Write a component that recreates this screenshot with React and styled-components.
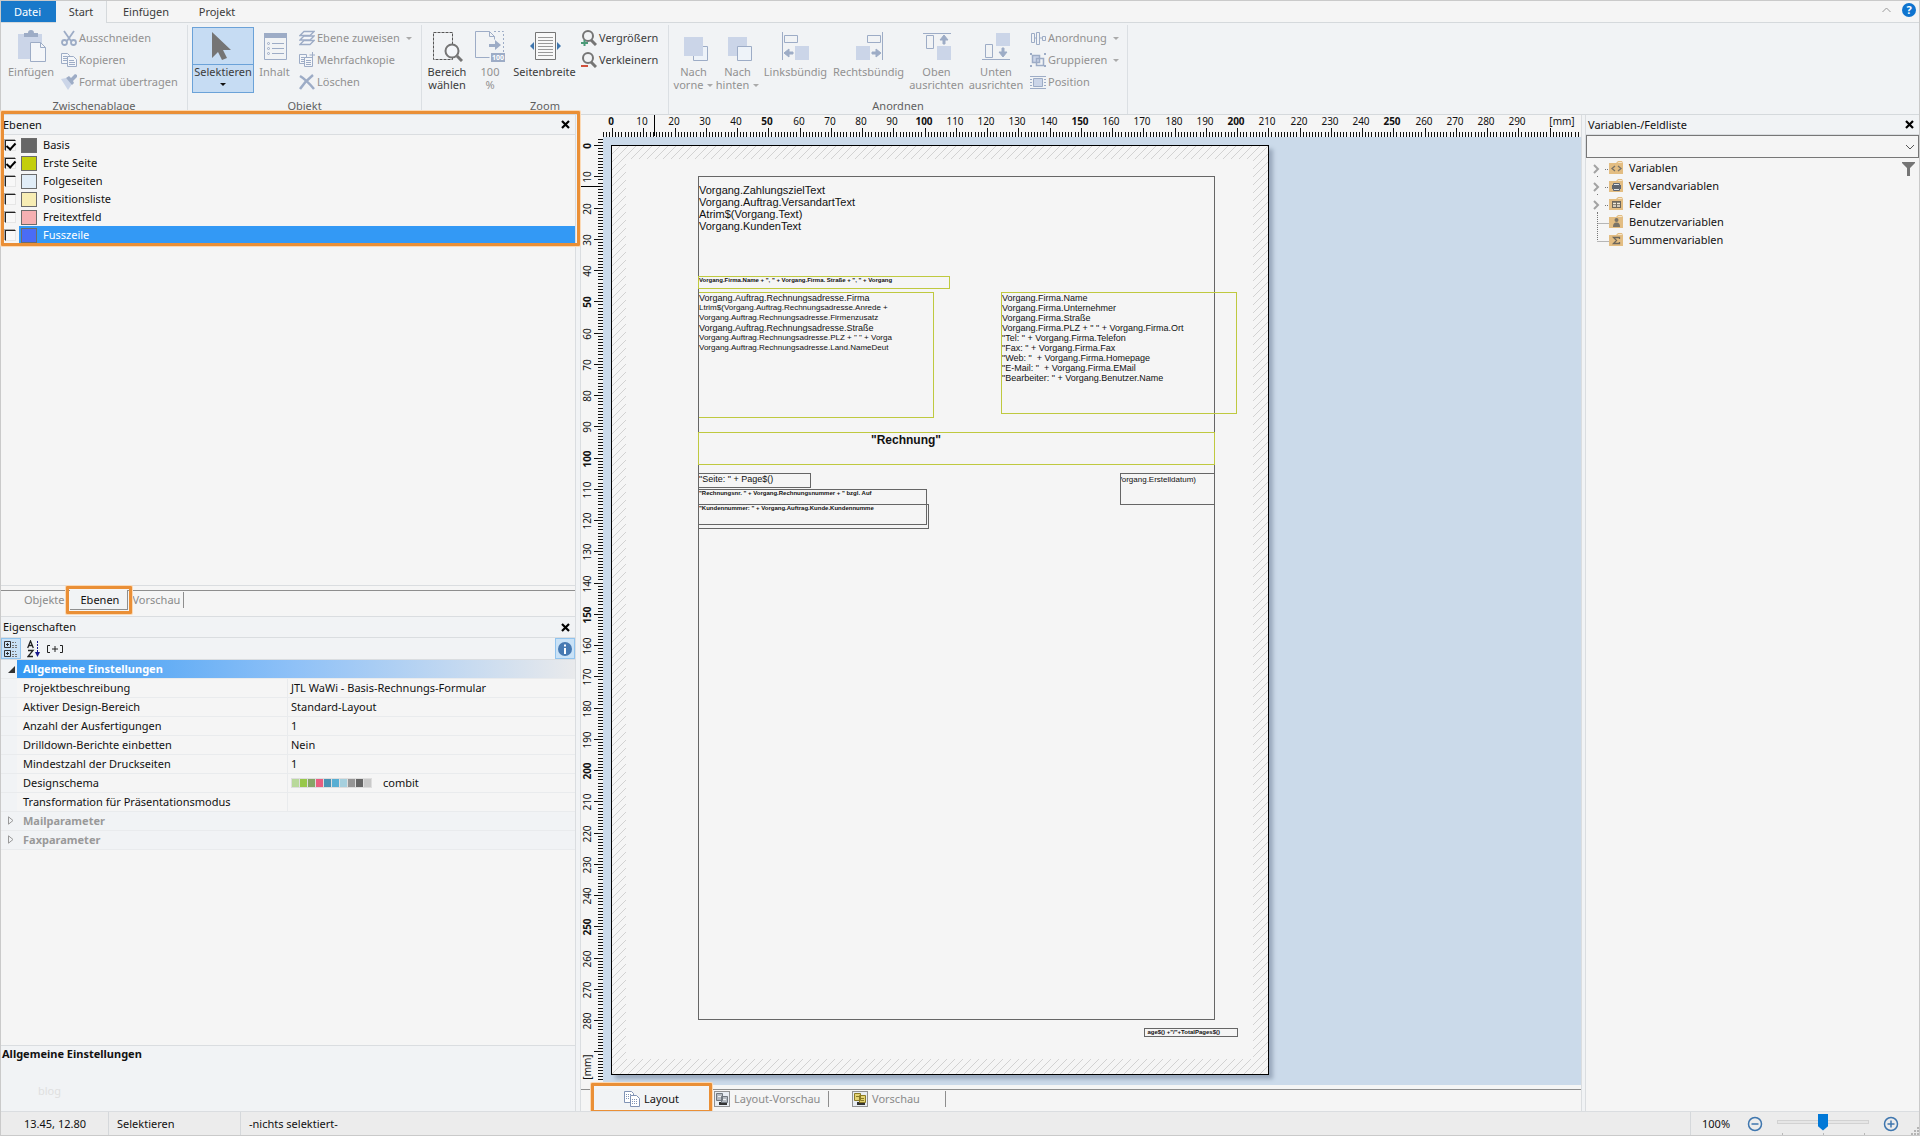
import React, { useState } from "react";
import styled, { createGlobalStyle, css } from "styled-components";

const PX_PER_MM = 3.125;

const layerData = [
	{ name: "Basis", color: "#666666", checked: true },
	{ name: "Erste Seite", color: "#c3ce0c", checked: true },
	{ name: "Folgeseiten", color: "#e1edf7", checked: false },
	{ name: "Positionsliste", color: "#f7edb4", checked: false },
	{ name: "Freitextfeld", color: "#f5b0b2", checked: false },
	{ name: "Fusszeile", color: "#4a6cf5", checked: false },
];

const schemeColors = [
	"#b9d99b",
	"#98c84a",
	"#86a567",
	"#e85e80",
	"#4a93b4",
	"#58aed3",
	"#a6d0de",
	"#969696",
	"#666666",
	"#c9c9c9",
];

const properties = [
	["Projektbeschreibung", "JTL WaWi - Basis-Rechnungs-Formular"],
	["Aktiver Design-Bereich", "Standard-Layout"],
	["Anzahl der Ausfertigungen", "1"],
	["Drilldown-Berichte einbetten", "Nein"],
	["Mindestzahl der Druckseiten", "1"],
	["Designschema", "combit"],
	["Transformation für Präsentationsmodus", ""],
];

const GREY = "#666666";
const LIME = "#bfc93f";

// positions are relative to the sheet
const objects = [
	{
		x: 86, y: 146, w: 236, h: 126, color: LIME, size: 9, line: 10, longSize: 8,
		lines: [
			"Vorgang.Auftrag.Rechnungsadresse.Firma",
			"Ltrim$(Vorgang.Auftrag.Rechnungsadresse.Anrede +",
			"Vorgang.Auftrag.Rechnungsadresse.Firmenzusatz",
			"Vorgang.Auftrag.Rechnungsadresse.Straße",
			'Vorgang.Auftrag.Rechnungsadresse.PLZ + " " + Vorga',
			"Vorgang.Auftrag.Rechnungsadresse.Land.NameDeut",
		],
	},
	{
		x: 86, y: 30, w: 517, h: 844, color: GREY, size: 11, line: 12, top: 7,
		lines: [
			"Vorgang.ZahlungszielText",
			"Vorgang.Auftrag.VersandartText",
			"Atrim$(Vorgang.Text)",
			"Vorgang.KundenText",
		],
	},
	{
		x: 86, y: 130, w: 252, h: 13, color: LIME, size: 6, line: 6, bold: true,
		lines: ['Vorgang.Firma.Name + ", " + Vorgang.Firma. Straße + ", " + Vorgang'],
	},
	{
		x: 389, y: 146, w: 236, h: 122, color: LIME, size: 9, line: 10,
		lines: [
			"Vorgang.Firma.Name",
			"Vorgang.Firma.Unternehmer",
			"Vorgang.Firma.Straße",
			'Vorgang.Firma.PLZ + " " + Vorgang.Firma.Ort',
			'"Tel: " + Vorgang.Firma.Telefon',
			'"Fax: " + Vorgang.Firma.Fax',
			'"Web: "  + Vorgang.Firma.Homepage',
			'"E-Mail: "  + Vorgang.Firma.EMail',
			'"Bearbeiter: " + Vorgang.Benutzer.Name',
		],
	},
	{
		x: 86, y: 286, w: 517, h: 33, color: LIME, size: 12, line: 14, width: 414, bold: true, align: "center",
		lines: ['"Rechnung"'],
	},
	{ x: 86, y: 327, w: 113, h: 15, color: GREY, size: 9, line: 11, lines: ['"Seite: " + Page$()'] },
	{
		x: 86, y: 343, w: 229, h: 36, color: GREY, size: 6, line: 6, bold: true,
		lines: ['"Rechnungsnr. " + Vorgang.Rechnungsnummer + " bzgl. Auf'],
	},
	{
		x: 86, y: 358, w: 231, h: 25, color: GREY, size: 6, line: 6, bold: true,
		lines: ['"Kundennummer: " + Vorgang.Auftrag.Kunde.Kundennumme'],
	},
	{
		x: 508, y: 327, w: 95, h: 32, color: GREY, size: 8, line: 11, width: 75, align: "flex-end",
		lines: ["Vorgang.Erstelldatum)"],
	},
	{
		x: 532, y: 882, w: 94, h: 9, color: GREY, size: 6, line: 6, width: 75, align: "flex-end", bold: true,
		lines: ['age$() +"/"+TotalPages$()'],
	},
];

/* ---------- icons ---------- */

const C = { line: "#9dacc6", fill: "#cbd5e8", dark: "#757575", blue: "#3f76ae" };

const bigIcons = {
	paste: (
		<>
			<path d="M3 4h24v25H3z" fill={C.fill} />
			<path d="M9 7V3h4a3 3 0 0 1 6 0h4v4z" fill={C.line} />
			<path d="M15.500 12.500h10l5 5v14h-15z" fill="#f4f6f9" stroke={C.line} />
			<path d="M25.500 12.500v5h5" fill="none" stroke={C.line} />
		</>
	),
	cursor: <path d="M5 2v26l6-6 4 8 5-2-4-8h8z" fill={C.dark} />,
	content: (
		<>
			<path d="M5 3h23v5H5z" fill={C.line} />
			<path d="M5.500 3.500h22v26h-22z" fill="none" stroke={C.line} />
			<path d="M13 13.500h12M13 18.500h12M13 23.500h12" stroke={C.line} />
			<g fill="none" stroke={C.line}>
				<circle cx="9.500" cy="13.500" r="1" />
				<circle cx="9.500" cy="18.500" r="1" />
				<circle cx="9.500" cy="23.500" r="1" />
			</g>
		</>
	),
	area: (
		<>
			<path d="M2.500 2.500h19v27h-19z" fill="none" stroke="#555" strokeDasharray="3 1" />
			<circle cx="21" cy="21" r="6.500" fill="#f4f6f9" stroke={C.dark} strokeWidth="2" />
			<path d="M26 26l5 5" stroke={C.dark} strokeWidth="3" />
		</>
	),
	hundred: (
		<>
			<path d="M1.500 1.500h14l5 5v3M1.500 1.500v26h14M15.500 1.500v5h5" fill="none" stroke={C.line} />
			<path d="M20 1.500h9.500V22" fill="none" stroke={C.line} strokeDasharray="2 2" />
			<path d="M15 14h6v-4l6 5-6 5v-3h-6z" fill={C.line} />
			<path d="M17 23h14v9H17z" fill={C.line} />
			<text x="24" y="30" fontSize="7" fontWeight="700" textAnchor="middle" fill="#fff" fontFamily="Noto Sans, sans-serif">
				100
			</text>
		</>
	),
	width: (
		<>
			<path d="M6.500 2.500h20v27h-20z" fill="#f8f8f8" stroke={C.dark} />
			<path d="M9 7.500h15M9 10.500h15M9 13.500h15M9 16.500h15M9 19.500h15M9 22.500h15M9 25.500h15" stroke="#999" />
			<path d="M5 12v8l-4-4zM28 12v8l4-4z" fill={C.blue} />
		</>
	),
	front: (
		<>
			<path d="M15.500 30.500h14v-14h-14z" fill="#eef3f9" stroke={C.line} />
			<path d="M6 7h19v19H6z" fill={C.fill} />
		</>
	),
	back: (
		<>
			<path d="M6 7h19v19H6z" fill={C.fill} />
			<path d="M15.500 16.500h14v14h-14z" fill="#eef3f9" stroke={C.line} />
		</>
	),
	left: (
		<>
			<path d="M2.500 2v28M4.500 5.500h13v7h-13z" fill="none" stroke={C.line} />
			<path d="M15 16h14v14H15z" fill={C.fill} />
			<path d="M4 23l5-4v3h4v2H9v3z" fill={C.line} stroke={C.line} />
		</>
	),
	right: (
		<>
			<path d="M29.500 2v28M14.500 5.500h13v7h-13z" fill="none" stroke={C.line} />
			<path d="M3 16h14v14H3z" fill={C.fill} />
			<path d="M28 23l-5-4v3h-4v2h4v3z" fill={C.line} stroke={C.line} />
		</>
	),
	top: (
		<>
			<path d="M2 3.500h28M5.500 5.500h7v13h-7z" fill="none" stroke={C.line} />
			<path d="M16 16h14v14H16z" fill={C.fill} />
			<path d="M23 5l-4 5h3v4h2v-4h3z" fill={C.line} stroke={C.line} />
		</>
	),
	bottom: (
		<>
			<path d="M2 29.500h28M5.500 14.500h7v13h-7z" fill="none" stroke={C.line} />
			<path d="M16 3h14v13H16z" fill={C.fill} />
			<path d="M23 27l-4-5h3v-4h2v4h3z" fill={C.line} stroke={C.line} />
		</>
	),
};

const smallIcons = {
	cut: (
		<g fill="none" stroke={C.line} strokeWidth="1.800">
			<path d="M3 1l7 10M13 1L6 11" />
			<circle cx="3.500" cy="12.500" r="2.500" />
			<circle cx="12.500" cy="12.500" r="2.500" />
		</g>
	),
	copy: (
		<g fill="#f4f6f9" stroke={C.line}>
			<path d="M.5 1.500h6l2 2v8h-8z" />
			<path d="M2 4.500h4M2 6.500h4M2 8.500h4" />
			<path d="M6.500 4.500h6l3 3v7h-9z" />
			<path d="M8 8.500h5M8 10.500h6M8 12.500h6" />
		</g>
	),
	brush: (
		<>
			<path d="M0 5l5-1 6 6-4 6z" fill={C.fill} />
			<path d="M5 4l3-2 2 2 4-4 2 1v2l-4 4 1 2-2 2z" fill={C.line} />
		</>
	),
	layers: (
		<g fill="#f4f6f9" stroke={C.line} strokeWidth="1.300">
			<path d="M5 10.500h10l-4 4H1z" />
			<path d="M5 6h10l-4 4H1z" />
			<path d="M5 1.500h10l-4 4H1z" />
		</g>
	),
	multi: (
		<g fill="#f4f6f9" stroke={C.line}>
			<path d="M.5 2.500h7v9h-7z" />
			<path d="M2 5.500h4M2 7.500h4M2 9.500h4" />
			<path d="M5.500 5.500h8v9h-8z" />
			<path d="M7 8.500h5M7 10.500h5M7 12.500h5M13.500 0v6M10.500 3h6" />
		</g>
	),
	remove: <path d="M1 2c5 3 9 7 14 13M14 1C9 5 5 9 1 15" fill="none" stroke={C.line} strokeWidth="2.500" />,
	zoomIn: (
		<>
			<circle cx="7" cy="6" r="5" fill="none" stroke={C.dark} strokeWidth="2" />
			<path d="M10 10l5 5" stroke={C.dark} strokeWidth="3" />
			<path d="M0 13h7M3.500 10v6" stroke="#4a9a78" strokeWidth="2" />
		</>
	),
	zoomOut: (
		<>
			<circle cx="7" cy="6" r="5" fill="none" stroke={C.dark} strokeWidth="2" />
			<path d="M10 10l5 5" stroke={C.dark} strokeWidth="3" />
			<path d="M0 14h7" stroke="#d0503c" strokeWidth="2" />
		</>
	),
	arrange: (
		<path d="M1.500 3.500h3v9h-3zM6.500 2.500h3v12h-3zM12.500 6.500h3v4h-3zM4.500 8h2M9.500 8h3" fill="none" stroke={C.line} />
	),
	group: (
		<>
			<path d="M2 3h8v8H2z" fill={C.fill} />
			<path d="M2.500 3.500h7v7h-7zM6.500 6.500h7v7h-7z" fill="none" stroke={C.line} strokeWidth="1.500" />
			<path d="M0 1h2v2H0zM14 1h2v2h-2zM0 13h2v2H0zM14 13h2v2h-2z" fill={C.line} />
		</>
	),
	position: (
		<>
			<path d="M0 2.500h16M0 14.500h16M0 5.500h2M0 8.500h2M0 11.500h2M14 5.500h2M14 8.500h2M14 11.500h2" stroke={C.line} />
			<path d="M3.500 4.500h9v8h-9z" fill={C.fill} stroke={C.line} />
		</>
	),
	layout: (
		<g fill="#fff" stroke="#8093b5">
			<path d="M.5.500h7l2 2v9h-9z" />
			<path d="M2 3.500h6M2 5.500h6M2 7.500h6" strokeDasharray="1 1" />
			<path d="M6.500 4.500h6l3 3v8h-9z" />
			<path d="M8 8.500h6M8 10.500h6M8 12.500h6" strokeDasharray="1 1" />
		</g>
	),
	preview: (
		<>
			<path d="M.5.500h15v15H.5z" fill="#e8edf3" stroke="#333" strokeDasharray="1 1" />
			<path d="M5 11h8v3H5z" fill="#333" />
			<path d="M2.500 2.500h6v7h-6zM7.500 5.500h6v6h-6z" fill="#b4bac1" stroke="#70777f" />
			<path d="M4 5.500h3M9 8.500h3" stroke="#eef1f4" />
		</>
	),
	previewColor: (
		<>
			<path d="M.5.500h15v15H.5z" fill="#e8edf3" stroke="#333" strokeDasharray="1 1" />
			<path d="M5 11h8v3H5z" fill="#333" />
			<path d="M2.500 2.500h6v7h-6zM7.500 4.500h6v7h-6z" fill="#e3d373" stroke="#8a7a26" />
			<path d="M9 7.500h3M9 9.500h3M4 5.500h3" stroke="#8a7a26" />
		</>
	),
};

const folderGlyphs = {
	code: <path d="M6 5L3 7.500 6 10M9 5l3 2.500L9 10" fill="none" stroke="#7a7468" strokeWidth="1.300" />,
	printer: (
		<>
			<path d="M3 6h9v4H3z" fill="#5f656f" />
			<path d="M4.500 4.500h6v2h-6zM4.500 9.500h6v2h-6z" fill="#dfe3e8" stroke="#5f656f" />
		</>
	),
	table: (
		<>
			<path d="M3 4h9v7H3z" fill="#6d675c" />
			<path d="M4 6.500h3M8 6.500h3M4 9h3M8 9h3" stroke="#f3ead8" strokeWidth="1.500" />
		</>
	),
	user: (
		<>
			<circle cx="7.500" cy="5" r="2" fill="#7a7468" />
			<path d="M4 12c0-3 .8-4.500 3.500-4.500S11 9 11 12z" fill="#7a7468" />
		</>
	),
	sum: <path d="M10.500 6V4.500h-6l3 3-3 3h6V9" fill="none" stroke="#6d675c" strokeWidth="1.300" />,
};

const Icon = ({ name }) => (
	<svg width="16" height="16" viewBox="0 0 16 16" aria-hidden="true">
		{smallIcons[name]}
	</svg>
);

const Folder = ({ glyph }) => (
	<svg width="15" height="14" viewBox="0 0 15 14" aria-hidden="true">
		<path d="M0 2h7l2-2h4l1 2v11H0z" fill="#e3bd82" />
		<path d="M8.500 2l1-1h3l1 1z" fill="#f5e6cd" />
		{folderGlyphs[glyph]}
	</svg>
);

const Branch = ({ kind }) => (
	<svg width="19" height="18" viewBox="0 0 19 18" aria-hidden="true">
		{kind === "closed" ? (
			<>
				<path d="M4 6l4 4-4 4" fill="none" stroke="#a2a2a2" strokeWidth="2" />
				<path d="M15 10.500h4M7.500 17v1" stroke="#777" strokeDasharray="1 1" />
			</>
		) : (
			<path d={kind === "last" ? "M7.500 0v10M7.500 10.500h12" : "M7.500 0v18M7.500 10.500h12"} fill="none" stroke="#777" strokeDasharray="1 1" />
		)}
	</svg>
);

const CloseIcon = () => (
	<svg width="9" height="9" viewBox="0 0 9 9" aria-hidden="true">
		<path d="M1 1l7 7M8 1L1 8" stroke="#000" strokeWidth="2.200" />
	</svg>
);

/* ---------- rulers ---------- */

function HorizontalRuler() {
	const origin = 31;
	const ticks = [];
	for (let mm = -3; mm <= 310; mm++) {
		const x = origin + Math.round(mm * PX_PER_MM);
		ticks.push(`M${x} ${mm % 10 === 0 ? 13 : 17}v${mm % 10 === 0 ? 9 : 5}`);
	}
	return (
		<RulerTop>
			<path d={ticks.join("")} stroke="#111" transform="translate(.5 0)" />
			<path d="M73.500 0v21" stroke="#000" />
			{Array.from({ length: 30 }, (_, i) => (
				<RulerText key={i} x={origin + Math.round(i * 10 * PX_PER_MM) - 1} y="10" $bold={i % 5 === 0}>
					{i * 10}
				</RulerText>
			))}
			<RulerText x={origin + 950} y="10">[mm]</RulerText>
		</RulerTop>
	);
}

function VerticalRuler() {
	const origin = 8;
	const ticks = [];
	for (let mm = -2; mm <= 300; mm++) {
		const y = origin + Math.round(mm * PX_PER_MM);
		ticks.push(`M${mm % 10 === 0 ? 13 : 17} ${y}h${mm % 10 === 0 ? 9 : 5}`);
	}
	const rotated = (y) => `translate(10 ${y}) rotate(-90)`;
	return (
		<RulerLeft>
			<path d={ticks.join("")} stroke="#111" transform="translate(0 .5)" />
			<path d="M0 49.500h19" stroke="#000" />
			{Array.from({ length: 29 }, (_, i) => (
				<RulerText key={i} transform={rotated(origin + 1 + Math.round(i * 10 * PX_PER_MM))} $bold={i % 5 === 0}>
					{i * 10}
				</RulerText>
			))}
			<RulerText transform={rotated(930)}>[mm]</RulerText>
		</RulerLeft>
	);
}

/* ---------- ribbon parts ---------- */

function RibbonButton({ icon, label, width, active, enabled, arrow }) {
	return (
		<BigButton type="button" $width={width} $active={active} $enabled={enabled || active}>
			<svg width="32" height="32" viewBox="0 0 32 32" aria-hidden="true">
				{bigIcons[icon]}
			</svg>
			{label.map((part, i) => (
				<span key={part}>
					{part}
					{arrow && i === label.length - 1 && <Caret />}
				</span>
			))}
			{active && <ActiveCaret />}
		</BigButton>
	);
}

function RibbonItem({ icon, label, enabled, arrow }) {
	return (
		<SmallButton type="button" $enabled={enabled}>
			<Icon name={icon} />
			{label}
			{arrow && <Caret />}
		</SmallButton>
	);
}

function Ribbon() {
	return (
		<RibbonBar>
			<Group>
				<GroupBody>
					<RibbonButton icon="paste" label={["Einfügen"]} width={52} />
					<SmallColumn $width={130}>
						<RibbonItem icon="cut" label="Ausschneiden" />
						<RibbonItem icon="copy" label="Kopieren" />
						<RibbonItem icon="brush" label="Format übertragen" />
					</SmallColumn>
				</GroupBody>
				<GroupLabel>Zwischenablage</GroupLabel>
			</Group>
			<Group>
				<GroupBody>
					<RibbonButton icon="cursor" label={["Selektieren"]} width={62} active />
					<RibbonButton icon="content" label={["Inhalt"]} width={41} />
					<SmallColumn $width={126}>
						<RibbonItem icon="layers" label="Ebene zuweisen" arrow />
						<RibbonItem icon="multi" label="Mehrfachkopie" />
						<RibbonItem icon="remove" label="Löschen" />
					</SmallColumn>
				</GroupBody>
				<GroupLabel>Objekt</GroupLabel>
			</Group>
			<Group>
				<GroupBody>
					<RibbonButton icon="area" label={["Bereich", "wählen"]} width={42} enabled />
					<RibbonButton icon="hundred" label={["100", "%"]} width={44} />
					<RibbonButton icon="width" label={["Seitenbreite"]} width={65} enabled />
					<SmallColumn $width={91}>
						<RibbonItem icon="zoomIn" label="Vergrößern" enabled />
						<RibbonItem icon="zoomOut" label="Verkleinern" enabled />
					</SmallColumn>
				</GroupBody>
				<GroupLabel>Zoom</GroupLabel>
			</Group>
			<Group>
				<GroupBody>
					<RibbonButton icon="front" label={["Nach", "vorne"]} width={41} arrow />
					<RibbonButton icon="back" label={["Nach", "hinten"]} width={47} arrow />
					<RibbonButton icon="left" label={["Linksbündig"]} width={69} />
					<RibbonButton icon="right" label={["Rechtsbündig"]} width={77} />
					<RibbonButton icon="top" label={["Oben", "ausrichten"]} width={59} />
					<RibbonButton icon="bottom" label={["Unten", "ausrichten"]} width={60} />
					<SmallColumn $width={101}>
						<RibbonItem icon="arrange" label="Anordnung" arrow />
						<RibbonItem icon="group" label="Gruppieren" arrow />
						<RibbonItem icon="position" label="Position" />
					</SmallColumn>
				</GroupBody>
				<GroupLabel>Anordnen</GroupLabel>
			</Group>
		</RibbonBar>
	);
}

/* ---------- panels ---------- */

function LayersPanel() {
	const [layers, setLayers] = useState(layerData);
	const [selected, setSelected] = useState("Fusszeile");

	const toggle = (name) => {
		setLayers(layers.map((l) => (l.name === name ? { ...l, checked: !l.checked } : l)));
	};

	return (
		<Layers>
			<Highlighted>
				<PanelHeader>
					Ebenen
					<CloseButton type="button" aria-label="Ebenen schließen">
						<CloseIcon />
					</CloseButton>
				</PanelHeader>
				<LayerList>
					{layers.map((layer) => (
						<LayerRow key={layer.name} $selected={layer.name === selected} onClick={() => setSelected(layer.name)}>
							<LayerCheck>
								<CheckBox
									type="checkbox"
									id={`layer-${layer.name}`}
									checked={layer.checked}
									onChange={() => toggle(layer.name)}
								/>
							</LayerCheck>
							<Swatch $color={layer.color} />
							<label htmlFor={`layer-${layer.name}`}>{layer.name}</label>
						</LayerRow>
					))}
				</LayerList>
			</Highlighted>
			<LayersTabs>
				<PanelTab type="button">Objekte</PanelTab>
				<PanelTabMarked>
					<PanelTab type="button" $active>Ebenen</PanelTab>
				</PanelTabMarked>
				<PanelTab type="button" $last>Vorschau</PanelTab>
			</LayersTabs>
		</Layers>
	);
}

function PropertiesPanel() {
	return (
		<Properties>
			<PanelHeader $divided>
				Eigenschaften
				<CloseButton type="button" aria-label="Eigenschaften schließen">
					<CloseIcon />
				</CloseButton>
			</PanelHeader>
			<PropertyTools>
				<ToolButton type="button" aria-label="Nach Kategorien" $active>
					<svg width="16" height="18" viewBox="0 0 16 18">
						<path d="M1.500 1.500h6v6h-6zM1.500 10.500h6v6h-6zM3 4.500h3M4.500 3v3M3 13.500h3M4.500 12v3" fill="none" stroke="#333" />
						<path d="M9 2.500h4M9 5.500h6M9 7.500h6M9 11.500h4M9 14.500h6M9 16.500h6" stroke="#777" strokeDasharray="2 1" />
					</svg>
				</ToolButton>
				<ToolButton type="button" aria-label="Alphabetisch">
					<svg width="14" height="18" viewBox="0 0 14 18">
						<path d="M.7 8L3.500 1l2.800 7M1.700 5.500h3.600M1 10.500h5L1 16.500h5" fill="none" stroke="#222" strokeWidth="1.300" />
						<path d="M10.500 1v12" stroke="#16168c" strokeDasharray="2 1" />
						<path d="M8 12h5l-2.500 5z" fill="#16168c" />
					</svg>
				</ToolButton>
				<ToolButton type="button" aria-label="Alle aufklappen">
					<svg width="16" height="10" viewBox="0 0 16 10">
						<path d="M3 1.500H.5v7H3M13 1.500h2.500v7H13M5 5h6M8 2v6" fill="none" stroke="#222" />
					</svg>
				</ToolButton>
				<InfoButton type="button" aria-label="Beschreibung" $active>
					<svg width="14" height="14" viewBox="0 0 14 14">
						<circle cx="7" cy="7" r="7" fill="#4679b2" />
						<path d="M7 2.500v2M7 6v6" stroke="#fff" strokeWidth="2" />
					</svg>
				</InfoButton>
			</PropertyTools>
			<PropertyTable>
				<colgroup>
					<NarrowCol />
					<NameCol />
					<col />
				</colgroup>
				<tbody>
					<tr>
						<Gutter>
							<svg width="7" height="7" viewBox="0 0 7 7"><path d="M7 0v7H0z" fill="#333" /></svg>
						</Gutter>
						<CategoryOpen colSpan="2">Allgemeine Einstellungen</CategoryOpen>
					</tr>
					{properties.map(([name, value]) => (
						<tr key={name}>
							<Gutter />
							<PropName>{name}</PropName>
							<PropValue>
								{name === "Designschema" ? (
									<Scheme>
										<SchemeStrip>
											{schemeColors.map((c) => (
												<SchemeCell key={c} $color={c} />
											))}
										</SchemeStrip>
										{value}
									</Scheme>
								) : (
									value
								)}
							</PropValue>
						</tr>
					))}
					{["Mailparameter", "Faxparameter"].map((name) => (
						<tr key={name}>
							<Gutter>
								<svg width="6" height="9" viewBox="0 0 6 9"><path d="M.5.800v7.400l4.500-3.700z" fill="none" stroke="#999" /></svg>
							</Gutter>
							<CategoryClosed colSpan="2">{name}</CategoryClosed>
						</tr>
					))}
				</tbody>
			</PropertyTable>
			<Description>
				<strong>Allgemeine Einstellungen</strong>
				<Faint>blog</Faint>
			</Description>
		</Properties>
	);
}

function Designer() {
	return (
		<Center>
			<HorizontalRuler />
			<WorkRow>
				<VerticalRuler />
				<Canvas>
					<Sheet>
						<Hatch />
						{objects.map((o) => (
							<DesignObject key={o.lines[0]} $o={o}>
								<ObjectText $o={o}>
									{o.lines.map((line) => (
										<ObjectLine key={line} $align={o.align} $size={o.longSize && line.length > 40 ? o.longSize : o.size}>
											{line}
										</ObjectLine>
									))}
								</ObjectText>
							</DesignObject>
						))}
					</Sheet>
				</Canvas>
			</WorkRow>
			<ViewTabs>
				<ViewTabMarked>
					<ViewTab type="button" $active>
						<Icon name="layout" />
						Layout
					</ViewTab>
				</ViewTabMarked>
				<ViewTab type="button" $width={117}>
					<Icon name="preview" />
					Layout-Vorschau
				</ViewTab>
				<ViewTab type="button" $width={117} $centered>
					<Icon name="previewColor" />
					Vorschau
				</ViewTab>
			</ViewTabs>
		</Center>
	);
}

function Hatch() {
	return (
		<HatchSvg aria-hidden="true">
			<defs>
				<pattern id="hatch" width="8" height="8" patternUnits="userSpaceOnUse">
					<path d="M-1 9L9-1" stroke="#d2d2d2" strokeWidth="1" />
				</pattern>
			</defs>
			<path d="M0 0H656V928H0zM14 13V913H641V13z" fill="url(#hatch)" fillRule="evenodd" />
		</HatchSvg>
	);
}

function FieldList() {
	const items = [
		["Variablen", "code", "closed"],
		["Versandvariablen", "printer", "closed"],
		["Felder", "table", "closed"],
		["Benutzervariablen", "user", "mid"],
		["Summenvariablen", "sum", "last"],
	];
	return (
		<FieldPanel>
			<PanelHeader>
				Variablen-/Feldliste
				<CloseButton type="button" aria-label="Feldliste schließen">
					<CloseIcon />
				</CloseButton>
			</PanelHeader>
			<SearchBox>
				<SearchSelect aria-label="Variablen suchen" defaultValue="">
					<option value=""></option>
				</SearchSelect>
				<svg width="10" height="6" viewBox="0 0 10 6" aria-hidden="true">
					<path d="M1 1l4 4 4-4" fill="none" stroke="#555" />
				</svg>
			</SearchBox>
			<TreeArea>
				<Tree>
					{items.map(([name, glyph, kind]) => (
						<TreeItem key={name}>
							<Branch kind={kind} />
							<Folder glyph={glyph} />
							<span>{name}</span>
						</TreeItem>
					))}
				</Tree>
				<IconButton type="button" aria-label="Filter">
					<svg width="13" height="14" viewBox="0 0 13 14">
						<path d="M0 0h13v1L8 6v8H5V6L0 1z" fill="#757575" />
					</svg>
				</IconButton>
			</TreeArea>
		</FieldPanel>
	);
}

function StatusBar() {
	const [zoom, setZoom] = useState(100);
	return (
		<Status>
			<StatusCell $width={108} $indent={23}>13.45, 12.80</StatusCell>
			<StatusCell $width={132} $indent={8}>Selektieren</StatusCell>
			<StatusText>-nichts selektiert-</StatusText>
			<ZoomArea>
				<ZoomValue>{zoom}%</ZoomValue>
				<ZoomControls>
					<IconButton type="button" aria-label="Verkleinern" onClick={() => setZoom(Math.max(0, zoom - 10))}>
						<svg width="16" height="16" viewBox="0 0 16 16">
							<circle cx="8" cy="8" r="6.500" fill="none" stroke="#3f76ae" strokeWidth="1.500" />
							<path d="M4.500 8h7" stroke="#3f76ae" strokeWidth="1.500" />
						</svg>
					</IconButton>
					<Slider type="range" min="0" max="200" value={zoom} aria-label="Zoom" onChange={(e) => setZoom(+e.target.value)} />
					<IconButton type="button" aria-label="Vergrößern" onClick={() => setZoom(Math.min(200, zoom + 10))}>
						<svg width="16" height="16" viewBox="0 0 16 16">
							<circle cx="8" cy="8" r="6.500" fill="none" stroke="#3f76ae" strokeWidth="1.500" />
							<path d="M4.500 8h7M8 4.500v7" stroke="#3f76ae" strokeWidth="1.500" />
						</svg>
					</IconButton>
				</ZoomControls>
				<Grip width="8" height="8" viewBox="0 0 8 8" aria-hidden="true">
					<path d="M6 0h2v2H6zM3 3h2v2H3zM6 3h2v2H6zM0 6h2v2H0zM3 6h2v2H3zM6 6h2v2H6z" fill="#b5b5b5" />
				</Grip>
			</ZoomArea>
		</Status>
	);
}

export default function App() {
	return (
		<>
			<GlobalStyle />
			<Window>
				<MenuBar>
					<FileTab type="button">Datei</FileTab>
					<MenuTab type="button" $width={51} $active>Start</MenuTab>
					<MenuTab type="button" $width={78}>Einfügen</MenuTab>
					<MenuTab type="button" $width={64}>Projekt</MenuTab>
					<MenuTools>
						<IconButton type="button" aria-label="Menüband minimieren">
							<svg width="9" height="6" viewBox="0 0 9 6"><path d="M.5 5l4-4 4 4" fill="none" stroke="#999" /></svg>
						</IconButton>
						<HelpButton type="button" aria-label="Hilfe">?</HelpButton>
					</MenuTools>
				</MenuBar>
				<Ribbon />
				<Main>
					<LeftColumn>
						<LayersPanel />
						<PropertiesPanel />
					</LeftColumn>
					<Designer />
					<FieldList />
				</Main>
				<StatusBar />
			</Window>
		</>
	);
}

/* ---------- styles ---------- */

const GlobalStyle = createGlobalStyle`
	* {
		box-sizing: border-box;
	}
	body {
		margin: 0;
		font-family: "Noto Sans", sans-serif;
		font-size: 11px;
		line-height: 14px;
		color: #111;
		background: #f5f5f5;
	}
	button, select, input {
		font: inherit;
		color: inherit;
		margin: 0;
	}
	button {
		padding: 0;
		border: 0;
		background: none;
		white-space: nowrap;
	}
	svg {
		display: block;
		flex: none;
	}
`;

const highlight = css`
	content: "";
	position: absolute;
	border: 3px solid #ea8f36;
	border-radius: 1px;
	box-shadow: 0 0 0 1px #fbd9b5;
	pointer-events: none;
	z-index: 2;
`;

const Window = styled.div`
	display: flex;
	flex-direction: column;
	min-height: 100vh;
	border: 1px solid #cacaca;
`;

const MenuBar = styled.nav`
	display: flex;
	height: 22px;
	border-bottom: 1px solid #d5d9dc;
`;

const FileTab = styled.button`
	width: 55px;
	padding-right: 2px;
	background: #1979ca;
	color: #fff;
`;

const MenuTab = styled.button`
	width: ${({ $width }) => $width}px;
	color: #3b3b3b;
	${({ $active }) =>
		$active &&
		css`
			height: 22px;
			background: #f1f3f5;
			border-right: 1px solid #d5d9dc;
		`}
`;

const MenuTools = styled.div`
	display: flex;
	align-items: center;
	gap: 11px;
	margin-left: auto;
	padding: 0 3px 3px 0;
`;

const IconButton = styled.button`
	flex: none;
`;

const HelpButton = styled.button`
	width: 14px;
	height: 14px;
	border-radius: 50%;
	background: #0f74cf;
	color: #fff;
	font-weight: 700;
`;

const RibbonBar = styled.div`
	display: flex;
	height: 92px;
	background: #f1f3f5;
	border-bottom: 1px solid #d5d9dc;
`;

const Group = styled.section`
	display: flex;
	flex-direction: column;
	margin-top: 2px;
	padding-top: 2px;
	border-right: 1px solid #dbdfe3;
`;

const GroupBody = styled.div`
	display: flex;
	height: 71px;
	padding-left: 4px;
`;

const GroupLabel = styled.div`
	text-align: center;
	color: #5f5f5f;
	line-height: 16px;
`;

const BigButton = styled.button`
	display: flex;
	flex-direction: column;
	align-items: center;
	width: ${({ $width }) => $width}px;
	height: 66px;
	padding-top: 3px;
	line-height: 13px;
	color: ${({ $enabled }) => ($enabled ? "#3b3b3b" : "#919191")};
	svg {
		margin-bottom: 3px;
	}
	${({ $active }) =>
		$active &&
		css`
			background: linear-gradient(#6ba2d8, #6ba2d8) 0 37px / 100% 1px no-repeat #c6dcf3;
			box-shadow: inset 0 0 0 1px #6ba2d8;
		`}
`;

const Caret = styled.i`
	display: inline-block;
	margin-left: 4px;
	vertical-align: 2px;
	border: 3px solid transparent;
	border-top-color: #aaa;
	border-bottom: 0;
`;

const ActiveCaret = styled.i`
	margin-top: 5px;
	border: 3px solid transparent;
	border-top-color: #111;
	border-bottom: 0;
`;

const SmallColumn = styled.div`
	display: flex;
	flex-direction: column;
	width: ${({ $width }) => $width}px;
	padding-left: 4px;
`;

const SmallButton = styled.button`
	display: flex;
	align-items: center;
	gap: 2px;
	height: 22px;
	color: ${({ $enabled }) => ($enabled ? "#3b3b3b" : "#919191")};
`;

const Main = styled.main`
	flex: 1;
	display: grid;
	grid-template-columns: 579px minmax(0, 1fr) 337px;
	background: #f1f3f5;
`;

const LeftColumn = styled.div`
	display: flex;
	flex-direction: column;
	margin-right: 4px;
	border-right: 1px solid #dadde0;
`;

const Layers = styled.section`
	display: flex;
	flex-direction: column;
	height: 501px;
	background: #f5f5f5;
`;

const Highlighted = styled.div`
	position: relative;
	&::after {
		${highlight}
		inset: -4px -5px -2px 0;
	}
`;

const PanelHeader = styled.header`
	display: flex;
	align-items: center;
	justify-content: space-between;
	height: ${({ $divided }) => ($divided ? 22 : 20)}px;
	padding: 0 4px 0 2px;
	background: #f1f3f5;
	border-bottom: 1px solid #dadde0;
	border-top: ${({ $divided }) => ($divided ? "1px solid #dadde0" : "0")};
`;

const CloseButton = styled.button`
	padding: 1px;
`;

const LayerList = styled.ul`
	list-style: none;
	margin: 0;
	padding: 1px 0 0;
`;

const LayerRow = styled.li`
	display: flex;
	align-items: center;
	height: 18px;
	label {
		padding-left: 6px;
	}
	${({ $selected }) =>
		$selected &&
		css`
			color: #fff;
			background: #3399f5;
		`}
`;

const LayerCheck = styled.span`
	display: flex;
	align-items: center;
	width: 18px;
	height: 18px;
	padding-left: 4px;
	margin-right: 2px;
	background: #f5f5f5;
`;

const CheckBox = styled.input`
	appearance: none;
	display: grid;
	place-items: center;
	width: 11px;
	height: 11px;
	border: 1px solid;
	border-color: #222 #e6e6e6 #e6e6e6 #222;
	box-shadow: -1px -1px 0 #a8a8a8;
	background: #f8f8f8;
	&:checked::after {
		content: "";
		width: 4px;
		height: 7px;
		margin-bottom: 2px;
		border: solid #000;
		border-width: 0 2px 2px 0;
		transform: rotate(42deg);
	}
`;

const Swatch = styled.span`
	width: 16px;
	height: 15px;
	border: 1px solid #6c6c6c;
	background: ${({ $color }) => $color};
`;

const tabStrip = css`
	display: flex;
	background: linear-gradient(#8e8e8e, #8e8e8e) 0 4px / 100% 1px no-repeat #f5f5f5;
	padding-top: 4px;
`;

const LayersTabs = styled.div`
	${tabStrip}
	height: 31px;
	margin-top: auto;
	padding-left: 18px;
	border-top: 1px solid #dadde0;
`;

const PanelTab = styled.button`
	height: 20px;
	color: #8a8a8a;
	padding-left: ${({ $last }) => ($last ? 4 : 5)}px;
	${({ $last }) =>
		$last &&
		css`
			height: 16px;
			margin-top: 2px;
			padding-right: 3px;
			border-right: 1px solid #8e8e8e;
		`}
	${({ $active }) =>
		$active &&
		css`
			width: 58px;
			padding: 0 0 0 2px;
			color: #111;
			background: #f1f3f5;
			border: solid #8e8e8e;
			border-width: 0 1px 1px 0;
		`}
`;

const PanelTabMarked = styled.div`
	position: relative;
	height: 20px;
	margin-left: 6px;
	&::after {
		${highlight}
		inset: -4px -4px;
	}
`;

const Properties = styled.section`
	flex: 1;
	display: flex;
	flex-direction: column;
	background: #f5f5f5;
`;

const PropertyTools = styled.div`
	display: flex;
	height: 22px;
	gap: 5px;
	background: #f1f3f5;
	border-bottom: 1px solid #dadde0;
`;

const ToolButton = styled.button`
	display: grid;
	place-items: center;
	min-width: 16px;
	height: 21px;
	${({ $active }) =>
		$active &&
		css`
			width: 20px;
			background: #c9e2f7;
			border: 1px solid #92c4ee;
		`}
`;

const InfoButton = styled(ToolButton)`
	margin-left: auto;
`;

const PropertyTable = styled.table`
	width: 100%;
	table-layout: fixed;
	border-spacing: 0;
	td {
		height: 19px;
		padding: 0 0 1px 6px;
		border-bottom: 1px solid #e9ebed;
	}
	tr:first-child td {
		padding-bottom: 0;
	}
`;

const NarrowCol = styled.col`
	width: 16px;
`;

const NameCol = styled.col`
	width: 271px;
`;

const Gutter = styled.td`
	background: #f1f3f5;
	svg {
		margin-left: 1px;
	}
`;

const CategoryOpen = styled.td`
	color: #fff;
	font-weight: 700;
	background: linear-gradient(90deg, #3498f3, #8fc1f7 50%, #e9eaec);
`;

const CategoryClosed = styled.td`
	color: #999;
	font-weight: 700;
	background: #f1f3f5;
`;

const PropName = styled.td`
	border-right: 1px solid #e9ebed;
`;

const PropValue = styled.td`
	&& {
		padding-left: 3px;
	}
`;

const Scheme = styled.div`
	display: flex;
	align-items: center;
	gap: 11px;
`;

const SchemeStrip = styled.div`
	display: flex;
	border: solid #dedede;
	border-width: 1px 0 1px 1px;
`;

const SchemeCell = styled.span`
	width: 8px;
	height: 8px;
	border-right: 1px solid #dedede;
	background: ${({ $color }) => $color};
`;

const Description = styled.div`
	height: 66px;
	margin-top: auto;
	padding: 1px;
	background: #f1f3f5;
	border-top: 1px solid #dadde0;
	strong {
		display: block;
	}
`;

const Faint = styled.div`
	padding: 23px 36px 0;
	color: #dfdfdf;
`;

const Center = styled.section`
	display: flex;
	flex-direction: column;
	border: solid #dadde0;
	border-width: 0 1px;
	overflow: hidden;
`;

const RulerTop = styled.svg`
	width: 100%;
	height: 22px;
	background: #f5f5f5;
`;

const RulerLeft = styled.svg`
	width: 22px;
	align-self: stretch;
	height: auto;
	background: #f5f5f5;
`;

const RulerText = styled.text`
	font-size: 10px;
	text-anchor: middle;
	font-weight: ${({ $bold }) => ($bold ? 700 : 400)};
	fill: #111;
`;

const WorkRow = styled.div`
	flex: 1;
	display: flex;
`;

const Canvas = styled.div`
	flex: 1;
	padding: 8px;
	background: #cbdaea;
`;

const Sheet = styled.div`
	position: relative;
	width: 658px;
	height: 930px;
	background: #f5f5f5;
	border: 1px solid #000;
	box-shadow: 4px 4px 4px #9aa9bd;
`;

const HatchSvg = styled.svg`
	width: 100%;
	height: 100%;
`;

const DesignObject = styled.div`
	position: absolute;
	left: ${({ $o }) => $o.x}px;
	top: ${({ $o }) => $o.y}px;
	width: ${({ $o }) => $o.w}px;
	height: ${({ $o }) => $o.h}px;
	padding-top: ${({ $o }) => $o.top || 0}px;
	border: 1px solid ${({ $o }) => $o.color};
	overflow: hidden;
`;

const ObjectText = styled.div`
	width: ${({ $o }) => ($o.width ? `${$o.width}px` : "auto")};
	font-family: "Liberation Sans", Arial, sans-serif;
	line-height: ${({ $o }) => $o.line}px;
	font-weight: ${({ $o }) => ($o.bold ? 700 : 400)};
	color: #111;
	white-space: pre;
`;

const ObjectLine = styled.div`
	display: flex;
	justify-content: ${({ $align }) => $align || "flex-start"};
	font-size: ${({ $size }) => $size}px;
`;

const ViewTabs = styled.div`
	${tabStrip}
	height: 26px;
	padding-left: 12px;
`;

const ViewTab = styled.button`
	display: flex;
	align-items: center;
	gap: 4px;
	width: ${({ $width }) => $width}px;
	height: 16px;
	margin-top: 2px;
	padding-left: ${({ $centered }) => ($centered ? 23 : 2)}px;
	color: #8a8a8a;
	border-right: 1px solid #8e8e8e;
	${({ $active }) =>
		$active &&
		css`
			width: 119px;
			height: 20px;
			margin: 0;
			padding-left: 31px;
			color: #111;
			background: #f1f3f5;
			border: 0;
		`}
`;

const ViewTabMarked = styled.div`
	position: relative;
	&::after {
		${highlight}
		inset: -6px 0 -2px -2px;
	}
`;

const FieldPanel = styled.aside`
	margin-left: 3px;
	background: #f5f5f5;
	border-left: 1px solid #dadde0;
`;

const SearchBox = styled.div`
	position: relative;
	svg {
		position: absolute;
		right: 4px;
		top: 9px;
		pointer-events: none;
	}
`;

const SearchSelect = styled.select`
	appearance: none;
	display: block;
	width: 100%;
	height: 23px;
	padding: 0 20px 0 4px;
	border: 1px solid #777;
	border-radius: 0;
	background: #f5f5f5;
`;

const TreeArea = styled.div`
	display: flex;
	justify-content: space-between;
	align-items: flex-start;
	padding: 1px 4px 0;
	> button {
		margin-top: 3px;
	}
`;

const Tree = styled.ul`
	list-style: none;
	margin: 0;
	padding: 0;
`;

const TreeItem = styled.li`
	display: flex;
	align-items: center;
	height: 18px;
	span {
		padding-left: 5px;
	}
`;

const Status = styled.footer`
	display: flex;
	height: 24px;
	background: #ececec;
	border-top: 1px solid #dadde0;
	line-height: 24px;
`;

const StatusCell = styled.div`
	width: ${({ $width }) => $width}px;
	padding-left: ${({ $indent }) => $indent}px;
	border-right: 1px solid #d5d8db;
`;

const StatusText = styled.div`
	padding-left: 8px;
`;

const ZoomArea = styled.div`
	display: flex;
	align-items: center;
	gap: 12px;
	margin-left: auto;
	padding-left: 11px;
	border-left: 1px solid #d5d8db;
`;

const ZoomControls = styled.div`
	display: flex;
	align-items: center;
	gap: 14px;
`;

const ZoomValue = styled.span`
	width: 33px;
`;

const Slider = styled.input`
	appearance: none;
	width: 92px;
	height: 22px;
	background: linear-gradient(#b9b9b9, #b9b9b9) 5px 100% / 1px 2px no-repeat,
		linear-gradient(#b9b9b9, #b9b9b9) 46px 100% / 1px 2px no-repeat,
		linear-gradient(#b9b9b9, #b9b9b9) 87px 100% / 1px 2px no-repeat;
	&::-webkit-slider-runnable-track {
		height: 4px;
		margin-bottom: 4px;
		border: 1px solid #d2d2d2;
		background: #e6e6e6;
	}
	&::-webkit-slider-thumb {
		appearance: none;
		width: 10px;
		height: 17px;
		margin-top: -7px;
		background: #0078d7;
		clip-path: polygon(0 0, 100% 0, 100% 75%, 50% 100%, 0 75%);
	}
`;

const Grip = styled.svg`
	align-self: flex-end;
`;
